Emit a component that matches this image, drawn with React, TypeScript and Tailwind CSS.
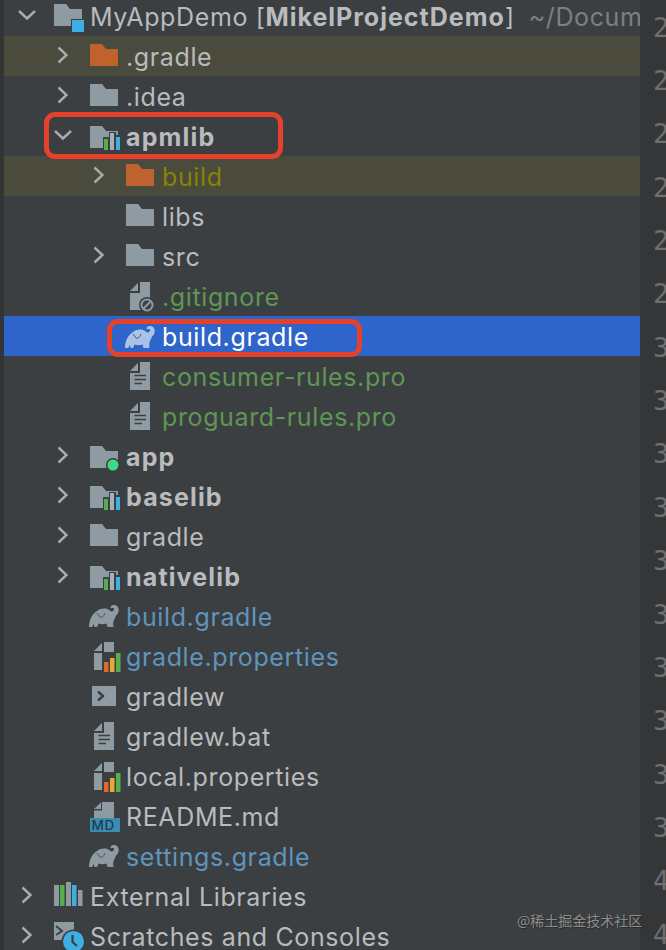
import type { ReactNode } from "react";

const GREY = "#8f9ba3";
const DARK = "#3c3f41";

function Svg({ children }: { children: ReactNode }) {
  return (
    <svg width="36" height="32" viewBox="0 0 36 32" className="shrink-0 overflow-visible">
      {children}
    </svg>
  );
}

const folderPath = (y: number) =>
  `M0 ${y}H12L16 ${y + 5}H28V${y + 22}H0Z`;

function Folder({ color = GREY }: { color?: string }) {
  return (
    <Svg>
      <path d={folderPath(4)} fill={color} />
    </Svg>
  );
}

function ProjectIcon() {
  return (
    <Svg>
      <path d={folderPath(4)} fill={GREY} />
      <rect x="17" y="19" width="13" height="13" fill={DARK} />
      <rect x="18" y="20" width="12" height="12" fill="#3cb0e2" />
    </Svg>
  );
}

function ModuleIcon() {
  return (
    <Svg>
      <path d={folderPath(6)} fill={GREY} />
      <rect x="13" y="17" width="6" height="15" fill={DARK} />
      <rect x="19" y="12" width="7" height="20" fill={DARK} />
      <rect x="25" y="15" width="6" height="17" fill={DARK} />
      <rect x="14" y="19" width="4" height="11" fill="#56ad4b" />
      <rect x="20" y="13" width="4" height="17" fill="#a6b0b6" />
      <rect x="26" y="17" width="4" height="13" fill="#3cb0e2" />
    </Svg>
  );
}

function AppIcon() {
  return (
    <Svg>
      <path d={folderPath(6)} fill={GREY} />
      <circle cx="23" cy="25" r="7" fill={DARK} />
      <circle cx="23" cy="25" r="5.5" fill="#3ddc84" />
    </Svg>
  );
}

function Elephant({ color = GREY, y = 5 }: { color?: string; y?: number }) {
  return (
    <Svg>
      <g transform={`translate(-1 ${y})`}>
        <path
          fill={color}
          d="M0 22C0 15 3 9 8 6C12 3 17 3 20 5C22 6.5 23 7 24 6C25.5 5 25.5 3 24 3C23 3 22.5 3.5 21.5 3L22 1C24 -0.5 27 -0.2 28.5 1.5C30.5 4 30 8 27.5 10C26.5 11 26 13 25 15C24 17 24 20 24.5 22H18.5L17.5 18.5C15 19.5 12 19.5 9.5 18.5L8 22H5.5L5 19L3 22Z"
        />
        <path d="M8 8L11 12C13 13 15 11 16 8" fill="none" stroke={DARK} strokeWidth="1" opacity="0.8" />
      </g>
    </Svg>
  );
}

function DocShape({ x = 4, y = 2 }: { x?: number; y?: number }) {
  return (
    <g transform={`translate(${x} ${y})`} fill={GREY}>
      <path d="M10 0H20V28H0V11H10Z" />
      <path d="M0 9L8 1V9Z" />
    </g>
  );
}

function TextDoc() {
  return (
    <Svg>
      <DocShape />
      <path d="M8.5 15.5H20M8.5 19.5H20M8.5 23.5H16" stroke={DARK} strokeWidth="1.6" />
    </Svg>
  );
}

function IgnoreDoc() {
  return (
    <Svg>
      <DocShape />
      <circle cx="21" cy="25" r="8" fill={DARK} />
      <circle cx="21" cy="25" r="5.5" fill="none" stroke={GREY} strokeWidth="2" />
      <path d="M17.5 28.5L24.5 21.5" stroke={GREY} strokeWidth="2" />
    </Svg>
  );
}

function PropsDoc() {
  return (
    <Svg>
      <DocShape />
      <rect x="12" y="12" width="19" height="20" fill={DARK} />
      <rect x="14" y="22" width="4.5" height="10" fill="#e2652a" />
      <rect x="20" y="18" width="4.5" height="14" fill="#e5a93a" />
      <rect x="26" y="13" width="4.5" height="19" fill="#56ad4b" />
    </Svg>
  );
}

function ShellIcon() {
  return (
    <Svg>
      <rect x="2" y="6" width="24" height="20" fill={GREY} />
      <path d="M8 11.5L13 16L8 20.5" fill="none" stroke={DARK} strokeWidth="2.4" />
    </Svg>
  );
}

function MdIcon() {
  return (
    <Svg>
      <path d="M12 2H24V18H4V10.5H12Z" fill={GREY} />
      <path d="M4 9L11 2.5V9Z" fill={GREY} />
      <rect x="0" y="18" width="30" height="14" fill="#3a8db0" />
      <text x="1.5" y="30" fontFamily="Inter, sans-serif" fontSize="13.5" fontWeight="500" fill="#1d3c52">
        MD
      </text>
    </Svg>
  );
}

function LibsIcon() {
  return (
    <Svg>
      <rect x="0" y="5" width="5" height="21" fill={GREY} />
      <rect x="6" y="5" width="4.5" height="21" fill="#56ad4b" />
      <rect x="12" y="2" width="5" height="24" fill={GREY} />
      <rect x="18" y="5" width="4.5" height="21" fill="#3cb0e2" />
      <rect x="24" y="10" width="4.5" height="16" fill={GREY} />
    </Svg>
  );
}

function ScratchIcon() {
  return (
    <Svg>
      <rect x="0" y="2" width="20" height="18" fill={GREY} />
      <path d="M2 6L8 11L2 15" fill="none" stroke={DARK} strokeWidth="2" />
      <circle cx="19.5" cy="21.5" r="12" fill={DARK} />
      <circle cx="19.5" cy="21.5" r="10.5" fill="#3cb0e2" />
      <path d="M18.5 15V22L23 26" fill="none" stroke={DARK} strokeWidth="2.2" />
    </Svg>
  );
}

function Chevron({ open }: { open: boolean }) {
  return (
    <svg width="24" height="24" viewBox="0 0 24 24" className="ml-[11px] shrink-0">
      <path
        d={open ? "M4 7L12 14.5L20 7" : "M7.5 3.5L15.5 11L7.5 18.5"}
        fill="none"
        stroke="#a9abad"
        strokeWidth="2.4"
      />
    </svg>
  );
}

type Row = {
  depth: 0 | 1 | 2;
  chevron?: "open" | "closed";
  icon: ReactNode;
  text: ReactNode;
  tone?: string;
  bg?: string;
};

const indent = { 0: "pl-0", 1: "pl-9", 2: "pl-[72px]" };
const hl = "bg-[#4a4a3d]";
const green = "text-[#5f9654]";
const blue = "text-[#5f94bd]";
const bold = "font-bold tracking-[1.15px]";

const rows: Row[] = [
  {
    depth: 0,
    chevron: "open",
    icon: <ProjectIcon />,
    text: (
      <>
        MyAppDemo [<b className="font-bold tracking-[1px]">MikelProjectDemo</b>]
        <span className="ml-[14px] text-[#7d7f81]">~/Documents/Projects</span>
      </>
    ),
  },
  { depth: 1, chevron: "closed", icon: <Folder color="#c0622e" />, text: ".gradle", bg: hl },
  { depth: 1, chevron: "closed", icon: <Folder />, text: ".idea" },
  { depth: 1, chevron: "open", icon: <ModuleIcon />, text: <b className={bold}>apmlib</b> },
  { depth: 2, chevron: "closed", icon: <Folder color="#c0622e" />, text: "build", tone: "text-[#858500]", bg: hl },
  { depth: 2, icon: <Folder />, text: "libs" },
  { depth: 2, chevron: "closed", icon: <Folder />, text: "src" },
  { depth: 2, icon: <IgnoreDoc />, text: ".gitignore", tone: green },
  { depth: 2, icon: <Elephant color="#a9c2e6" y={6} />, text: "build.gradle", tone: "text-white", bg: "bg-[#2f65ca]" },
  { depth: 2, icon: <TextDoc />, text: "consumer-rules.pro", tone: green },
  { depth: 2, icon: <TextDoc />, text: "proguard-rules.pro", tone: green },
  { depth: 1, chevron: "closed", icon: <AppIcon />, text: <b className={bold}>app</b> },
  { depth: 1, chevron: "closed", icon: <ModuleIcon />, text: <b className={bold}>baselib</b> },
  { depth: 1, chevron: "closed", icon: <Folder />, text: "gradle" },
  { depth: 1, chevron: "closed", icon: <ModuleIcon />, text: <b className={bold}>nativelib</b> },
  { depth: 1, icon: <Elephant />, text: "build.gradle", tone: blue },
  { depth: 1, icon: <PropsDoc />, text: "gradle.properties", tone: blue },
  { depth: 1, icon: <ShellIcon />, text: "gradlew" },
  { depth: 1, icon: <TextDoc />, text: "gradlew.bat" },
  { depth: 1, icon: <PropsDoc />, text: "local.properties" },
  { depth: 1, icon: <MdIcon />, text: "README.md" },
  { depth: 1, icon: <Elephant />, text: "settings.gradle", tone: blue },
  { depth: 0, chevron: "closed", icon: <LibsIcon />, text: "External Libraries" },
  { depth: 0, chevron: "closed", icon: <ScratchIcon />, text: "Scratches and Consoles" },
];

const lines = [24, 25, 26, 27, 28, 29, 30, 31, 32, 33, 34, 35, 36, 37, 38, 39, 40, 41];

export default function App() {
  return (
    <div className="relative flex h-[950px] w-[666px] overflow-hidden bg-[#3c3f41] font-[Inter,sans-serif]">
      <div className="w-1 shrink-0 bg-[#323436]" />
      <div className="-mt-1 w-[636px] shrink-0 overflow-hidden">
        {rows.map((r, i) => (
          <div
            key={i}
            className={`flex h-10 items-center whitespace-nowrap text-[25px] tracking-[0.62px] ${indent[r.depth]} ${r.bg ?? ""} ${r.tone ?? "text-[#b9bbbd]"}`}
          >
            <div className="flex w-[50px] shrink-0 items-center">
              {r.chevron ? <Chevron open={r.chevron === "open"} /> : null}
            </div>
            <div className="w-9 shrink-0">{r.icon}</div>
            <span className="pt-1">{r.text}</span>
          </div>
        ))}
      </div>
      <div className="flex-1 overflow-hidden bg-[#343638] pl-[13px] pt-[1.3px] font-['DejaVu_Sans_Mono',monospace] text-[27px] text-[#6d6f71]">
        {lines.map((n) => (
          <div key={n} className="flex h-[53.35px] items-center">
            {n}
          </div>
        ))}
      </div>

      <div className="absolute left-[44px] top-[112px] h-[47px] w-[239px] rounded-[11px] border-[5px] border-[#e5412b]" />
      <div className="absolute left-[107px] top-[319px] h-[38px] w-[255px] rounded-[11px] border-[5px] border-[#e5412b]" />
      <div className="absolute left-[517px] top-[911px] whitespace-nowrap font-['Noto_Sans_CJK_SC',sans-serif] text-[14px] leading-[18px] text-[#8c8c8c] [text-shadow:1px_1px_1px_#2a2a2a]">
        @稀土掘金技术社区
      </div>
    </div>
  );
}
